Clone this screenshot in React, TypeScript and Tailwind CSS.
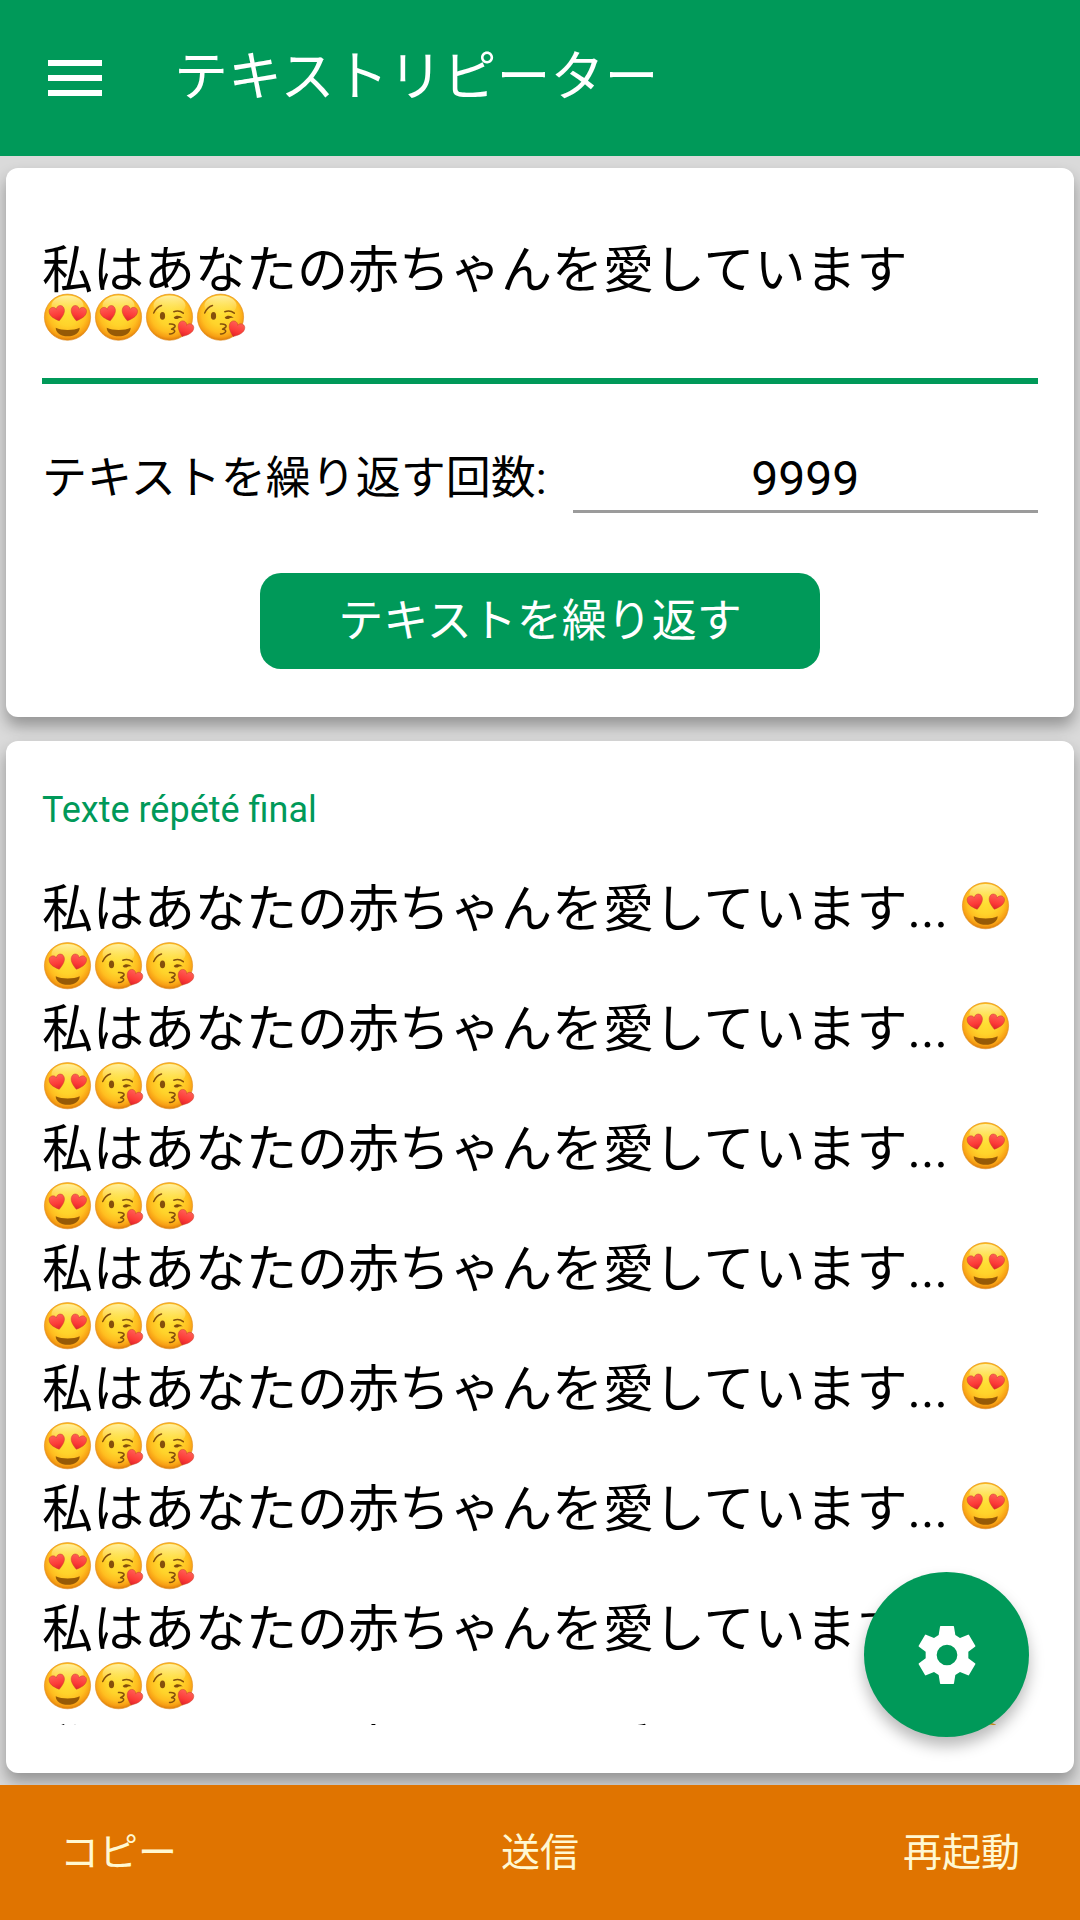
import { ChangeEvent, useState } from "react";

type EmojiName = "love" | "kiss";

const EMOJIS: EmojiName[] = ["love", "love", "kiss", "kiss"];
const HEART =
  "M0 8C-4 5-8.2 1.5-8.2-3C-8.2-6-6.2-7.6-4-7.6C-2-7.6-.6-6.4 0-4.6C.6-6.4 2-7.6 4-7.6C6.2-7.6 8.2-6 8.2-3C8.2 1.5 4 5 0 8Z";

// Gradients shared by every emoji on the page
function EmojiDefs() {
  return (
    <svg className="absolute h-0 w-0" aria-hidden="true">
      <defs>
        <radialGradient id="face" cx="0.5" cy="0.42" r="0.58">
          <stop offset="0" stopColor="#ffe034" />
          <stop offset="0.45" stopColor="#ffd32b" />
          <stop offset="0.7" stopColor="#ffbe20" />
          <stop offset="0.88" stopColor="#f79f14" />
          <stop offset="1" stopColor="#dc7c0c" />
        </radialGradient>
        <linearGradient id="shine" x1="0" y1="0" x2="0" y2="1">
          <stop offset="0" stopColor="#fff9b8" stopOpacity="0.85" />
          <stop offset="1" stopColor="#fff07a" stopOpacity="0" />
        </linearGradient>
        <linearGradient id="heart" x1="0" y1="0" x2="0" y2="1">
          <stop offset="0" stopColor="#ff5f55" />
          <stop offset="0.6" stopColor="#fc3a38" />
          <stop offset="1" stopColor="#de2329" />
        </linearGradient>
      </defs>
    </svg>
  );
}

function Heart({ place }: { place: string }) {
  return <path d={HEART} transform={place} fill="url(#heart)" stroke="#c9402a" strokeWidth="0.5" />;
}

function Emoji({ name, short = false }: { name: EmojiName; short?: boolean }) {
  return (
    <svg
      role="img"
      aria-label={name === "love" ? "😍" : "😘"}
      viewBox="0 0 51 60"
      preserveAspectRatio="xMidYMid slice"
      className={`inline-block w-[51px] overflow-visible align-bottom ${short ? "h-[51px]" : "h-[60px]"}`}
    >
      <circle cx="25.5" cy="25.7" r="23.1" fill="url(#face)" stroke="#de8a1a" strokeWidth="0.6" />
      <ellipse cx="25.5" cy="14" rx="16" ry="10" fill="url(#shine)" />
      {name === "love" ? (
        <>
          <Heart place="translate(15.4 22) rotate(-14) scale(0.94)" />
          <Heart place="translate(36.2 22) rotate(14) scale(0.94)" />
          <path
            d="M13.7 36.2C17 37.8 21 38.4 25.7 38.4S34.5 37.8 37.7 36.2C37.6 41.5 32.5 44.8 25.7 44.8S13.8 41.5 13.7 36.2Z"
            fill="#965a06"
          />
        </>
      ) : (
        <>
          <g fill="none" stroke="#85500c" strokeWidth="1.5" strokeLinecap="round">
            <path d="M9.7 21.5C11.4 17.6 14 15 17.5 14" />
            <path d="M29.8 20.3C33 18.9 36.5 19.4 39.3 21.7" />
          </g>
          <ellipse cx="18.5" cy="24.4" rx="2.6" ry="3.8" fill="#85500c" />
          <path d="M29.7 26C32 23.5 36 23.8 38.8 26.5C36.5 26.2 35 26.4 33.5 27.4C32 27.8 30.5 27.5 29.7 26Z" fill="#85500c" />
          <path
            d="M25.5 32.6C29.5 32.2 32 33.7 30.8 35.5C30 36.7 28.5 37 27.6 37.7C30.5 37.8 31.6 39.5 30 41C28.8 42.1 27 42.6 25.5 42.4"
            fill="none"
            stroke="#85500c"
            strokeWidth="1.5"
            strokeLinecap="round"
            strokeLinejoin="round"
          />
          <Heart place="translate(41 37.9) rotate(22) scale(0.96)" />
        </>
      )}
    </svg>
  );
}

function MenuIcon() {
  return (
    <svg viewBox="0 0 24 24" className="h-[72px] w-[72px]" fill="currentColor" aria-hidden="true">
      <path d="M3 18h18v-2H3v2zm0-5h18v-2H3v2zm0-7v2h18V6H3z" />
    </svg>
  );
}

function GearIcon() {
  return (
    <svg viewBox="-87 -87 174 174" className="h-[58px] w-[58px]" aria-hidden="true">
      <path
        fill="currentColor"
        fillRule="evenodd"
        d="M-19-87H19Q21-87 21-85L25-60L39-51L63-61Q65-62 66-60L85-28Q86-26 84-25L64-10V10L84 25Q86 26 85 28L66 60Q65 62 63 61L39 51L25 60L21 85Q21 87 19 87H-19Q-21 87-21 85L-25 60L-39 51L-63 61Q-65 62-66 60L-85 28Q-86 26-84 25L-64 10V-10L-84-25Q-86-26-85-28L-66-60Q-65-62-63-61L-39-51L-25-60L-21-85Q-21-87-19-87ZM0-31A31 31 0 1 0 0 31A31 31 0 1 0 0-31Z"
      />
    </svg>
  );
}

export default function App() {
  const [text, setText] = useState<string>("私はあなたの赤ちゃんを愛しています");
  const [count, setCount] = useState<string>("9999");
  const [repeated, setRepeated] = useState<string>(text);

  function handleTextChange(e: ChangeEvent<HTMLTextAreaElement>) {
    setText(e.target.value);
  }

  function handleCountChange(e: ChangeEvent<HTMLInputElement>) {
    setCount(e.target.value);
  }

  // Only the first few repeats fit in the preview
  const rows = Math.min(parseInt(count) || 0, 8);

  return (
    <div className="flex h-screen flex-col bg-[#dadada] font-['Roboto','Noto_Sans_CJK_JP',sans-serif] text-black">
      <EmojiDefs />
      <header className="flex h-[156px] shrink-0 items-center gap-[63px] bg-[#009959] px-[39px] text-white">
        <button type="button" aria-label="メニュー">
          <MenuIcon />
        </button>
        <h1 className="text-[54px] leading-[64px]">テキストリピーター</h1>
      </header>

      <main className="flex min-h-0 flex-1 flex-col gap-6 px-1.5 py-3">
        <section className="rounded-xl bg-white px-9 pt-[77px] pb-12 shadow-[0_9px_15px_rgba(0,0,0,0.32)]">
          <div className="border-b-6 border-[#009959] pb-[31px]">
            <textarea
              aria-label="テキスト"
              rows={1}
              value={text}
              onChange={handleTextChange}
              className="block h-[51px] w-full resize-none overflow-hidden text-[51px] leading-[51px] outline-none"
            />
            <div className="flex">
              {EMOJIS.map((name, i) => (
                <Emoji key={i} name={name} short />
              ))}
            </div>
          </div>

          <div className="mt-[63px] flex items-start gap-[26px]">
            <label htmlFor="count" className="shrink-0 text-[45px] leading-[63px]">
              テキストを繰り返す回数:
            </label>
            <input
              id="count"
              type="text"
              inputMode="numeric"
              value={count}
              onChange={handleCountChange}
              className="h-[66px] min-w-0 flex-1 border-b-3 border-[#9b9b9b] text-center text-[48px] leading-[63px] outline-none"
            />
          </div>

          <button
            type="button"
            onClick={() => setRepeated(text)}
            className="mx-auto mt-[60px] block h-24 rounded-[21px] bg-[#009959] px-[78px] text-[45px] leading-[53px] text-white"
          >
            テキストを繰り返す
          </button>
        </section>

        <section className="relative flex min-h-0 flex-1 flex-col rounded-xl bg-white px-9 py-12 shadow-[0_9px_15px_rgba(0,0,0,0.32)]">
          <h2 className="text-[36px] leading-[42px] text-[#009959]">Texte répété final</h2>
          <div className="mt-[49px] min-h-0 flex-1 overflow-hidden text-[51px] leading-[60px]">
            {Array.from({ length: rows }, (_, row) => (
              <p key={row}>
                {repeated}...{" "}
                {EMOJIS.map((name, i) => (
                  <Emoji key={i} name={name} />
                ))}
              </p>
            ))}
          </div>
          <button
            type="button"
            aria-label="設定"
            className="absolute right-[45px] bottom-9 flex h-[165px] w-[165px] items-center justify-center rounded-full bg-[#009959] text-white shadow-[0_9px_15px_rgba(0,0,0,0.28)]"
          >
            <GearIcon />
          </button>
        </section>
      </main>

      <footer className="relative grid h-[135px] shrink-0 grid-cols-3 items-center bg-[#e07400] px-[60px] text-[39px] leading-[46px] text-[#fff8d2]">
        <button type="button" className="justify-self-start">コピー</button>
        <button type="button" className="justify-self-center">送信</button>
        <button type="button" className="justify-self-end">再起動</button>
      </footer>
    </div>
  );
}
